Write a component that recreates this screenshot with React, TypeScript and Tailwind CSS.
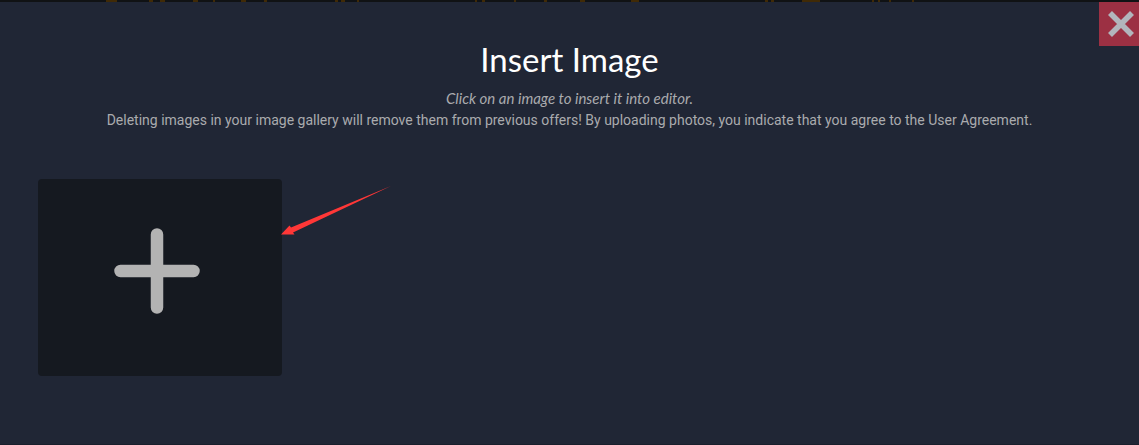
import { useState } from "react";

// Orange details of the page behind the dialog that peek out above it
const backdropMarks = [
  [106, 11], [149, 4], [160, 5], [193, 5], [213, 2], [241, 5], [264, 3],
  [335, 3], [341, 4], [357, 2], [475, 2], [482, 3], [514, 2], [544, 3],
  [580, 5], [631, 8], [765, 3], [771, 3], [802, 18], [872, 2], [878, 2],
  [889, 2], [912, 2],
];

function CloseIcon() {
  return (
    <svg viewBox="0 0 26 26" className="h-[26px] w-[26px]" aria-hidden="true">
      <path d="M2 2 24 24M24 2 2 24" stroke="#b2b5bc" strokeWidth="5.6" />
    </svg>
  );
}

function PlusIcon() {
  return (
    <svg viewBox="0 0 86 86" className="h-[86px] w-[86px]" aria-hidden="true">
      <path
        d="M43 6.5V79.5M6.5 43H79.5"
        stroke="#b3b3b3"
        strokeWidth="12.5"
        strokeLinecap="round"
      />
    </svg>
  );
}

function Arrow() {
  return (
    <svg
      viewBox="0 0 110 50"
      className="pointer-events-none absolute top-1.5 left-full h-[50px] w-[110px] overflow-visible"
      aria-hidden="true"
    >
      <path d="M-1 49.5 7.5 40.5 9 42.5 109 1 11 47.5 12.5 49.5Z" fill="#ff3737" />
    </svg>
  );
}

export default function App() {
  const [open, setOpen] = useState(true);

  return (
    <div className="flex min-h-screen flex-col bg-[#101214] font-['Lato','Roboto',sans-serif]">
      <svg className="h-[2px] w-full shrink-0" aria-hidden="true">
        {backdropMarks.map(([x, width]) => (
          <rect key={x} x={x} width={width} height="2" fill="#402a06" />
        ))}
      </svg>

      {open && (
        <section
          role="dialog"
          aria-labelledby="dialog-title"
          className="relative flex-1 border-b border-[#1a1f2c] bg-[#202635] pb-16"
        >
          <button
            type="button"
            aria-label="Close"
            onClick={() => setOpen(false)}
            className="absolute top-0 right-0 flex h-11 w-10 items-center justify-center bg-[#9c3043] pl-1"
          >
            <CloseIcon />
          </button>

          <header className="px-4 pt-[34px] text-center text-[#aaabae]">
            <h1
              id="dialog-title"
              className="mb-[5px] text-[33px] leading-[46px] text-white"
            >
              Insert Image
            </h1>
            <p className="text-[15px] leading-[22px] italic">
              Click on an image to insert it into editor.
            </p>
            <p className="font-['Roboto',sans-serif] text-[14px] leading-[22px]">
              Deleting images in your image gallery will remove them from previous offers! By
              uploading photos, you indicate that you agree to the User Agreement.
            </p>
          </header>

          <div className="mt-12 flex flex-wrap px-[38px]">
            <div className="relative">
              <button
                type="button"
                aria-label="Upload image"
                className="flex h-[197px] w-[244px] items-center justify-center rounded bg-[#151920] pr-1.5 pb-3.5"
              >
                <PlusIcon />
              </button>
              <Arrow />
            </div>
          </div>
        </section>
      )}
    </div>
  );
}
